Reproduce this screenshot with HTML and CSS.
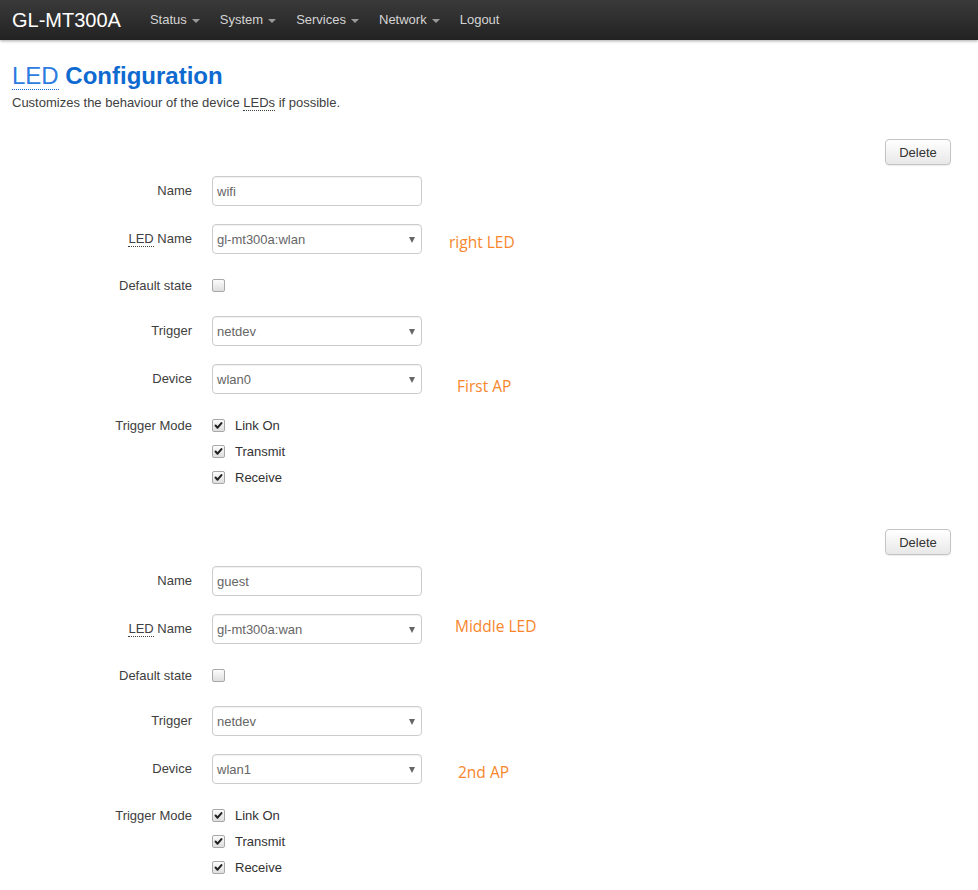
FILE: index.html
```html
<!DOCTYPE html>
<html>
<head>
<meta charset="utf-8">
<title>GL-MT300A - LED Configuration</title>
<link rel="stylesheet" href="styles.css">
</head>
<body>
<header class="navbar">
  <a class="brand" href="#">GL-MT300A</a>
  <nav class="nav">
    <a href="#">Status<span class="caret"></span></a>
    <a href="#">System<span class="caret"></span></a>
    <a href="#">Services<span class="caret"></span></a>
    <a href="#">Network<span class="caret"></span></a>
    <a href="#">Logout</a>
  </nav>
</header>

<main class="content">
  <h1 class="title"><abbr class="abbr-title">LED</abbr> Configuration</h1>
  <p class="desc">Customizes the behaviour of the device <abbr class="abbr">LEDs</abbr> if possible.</p>

  <section class="section">
    <div class="actions"><button class="btn">Delete</button></div>
    <div class="row">
      <label class="lbl">Name</label>
      <div class="field"><input class="input" type="text" value="wifi"></div>
    </div>
    <div class="row">
      <label class="lbl"><abbr class="abbr">LED</abbr> Name</label>
      <div class="field"><div class="select">gl-mt300a:wlan<span class="arrow"></span></div></div>
      <span class="note note-1">right LED</span>
    </div>
    <div class="row row-check">
      <label class="lbl">Default state</label>
      <div class="field"><span class="cb"></span></div>
    </div>
    <div class="row">
      <label class="lbl">Trigger</label>
      <div class="field"><div class="select">netdev<span class="arrow"></span></div></div>
    </div>
    <div class="row">
      <label class="lbl">Device</label>
      <div class="field"><div class="select">wlan0<span class="arrow"></span></div></div>
      <span class="note note-2">First AP</span>
    </div>
    <div class="row row-modes">
      <label class="lbl">Trigger Mode</label>
      <div class="field modes">
        <div class="opt"><span class="cb on"><svg viewBox="0 0 13 13"><path d="M3 6.5l2.4 2.6L10 3.6" /></svg></span>Link On</div>
        <div class="opt"><span class="cb on"><svg viewBox="0 0 13 13"><path d="M3 6.5l2.4 2.6L10 3.6" /></svg></span>Transmit</div>
        <div class="opt"><span class="cb on"><svg viewBox="0 0 13 13"><path d="M3 6.5l2.4 2.6L10 3.6" /></svg></span>Receive</div>
      </div>
    </div>
  </section>

  <section class="section">
    <div class="actions"><button class="btn">Delete</button></div>
    <div class="row">
      <label class="lbl">Name</label>
      <div class="field"><input class="input" type="text" value="guest"></div>
    </div>
    <div class="row">
      <label class="lbl"><abbr class="abbr">LED</abbr> Name</label>
      <div class="field"><div class="select">gl-mt300a:wan<span class="arrow"></span></div></div>
      <span class="note note-3">Middle LED</span>
    </div>
    <div class="row row-check">
      <label class="lbl">Default state</label>
      <div class="field"><span class="cb"></span></div>
    </div>
    <div class="row">
      <label class="lbl">Trigger</label>
      <div class="field"><div class="select">netdev<span class="arrow"></span></div></div>
    </div>
    <div class="row">
      <label class="lbl">Device</label>
      <div class="field"><div class="select">wlan1<span class="arrow"></span></div></div>
      <span class="note note-4">2nd AP</span>
    </div>
    <div class="row row-modes">
      <label class="lbl">Trigger Mode</label>
      <div class="field modes">
        <div class="opt"><span class="cb on"><svg viewBox="0 0 13 13"><path d="M3 6.5l2.4 2.6L10 3.6" /></svg></span>Link On</div>
        <div class="opt"><span class="cb on"><svg viewBox="0 0 13 13"><path d="M3 6.5l2.4 2.6L10 3.6" /></svg></span>Transmit</div>
        <div class="opt"><span class="cb on"><svg viewBox="0 0 13 13"><path d="M3 6.5l2.4 2.6L10 3.6" /></svg></span>Receive</div>
      </div>
    </div>
  </section>
</main>
</body>
</html>
```

FILE: styles.css
```css
* { box-sizing: border-box; }
html, body { margin: 0; padding: 0; background: #fff; }
body {
  font-family: "Liberation Sans", Arial, sans-serif;
  font-size: 13px;
  color: #404040;
  overflow: hidden;
}

.navbar {
  height: 40px;
  display: flex;
  align-items: center;
  padding-left: 12px;
  background: linear-gradient(to bottom, #3a3a3a 0%, #222 100%);
  box-shadow: 0 1px 3px rgba(0,0,0,0.35);
}
.brand {
  color: #fff;
  font-size: 20px;
  text-decoration: none;
  margin-right: 19px;
  line-height: 40px;
}
.nav { display: flex; height: 40px; }
.nav a {
  color: #d4d4d4;
  text-decoration: none;
  font-size: 13px;
  padding: 0 10px;
  line-height: 40px;
  display: flex;
  align-items: center;
}
.caret {
  display: inline-block;
  width: 0; height: 0;
  margin-left: 5px;
  margin-top: 1px;
  border-left: 4px solid transparent;
  border-right: 4px solid transparent;
  border-top: 4px solid #9a9a9a;
}

.content { padding: 0 12px; }
.title {
  margin: 20px 0 0;
  font-size: 24px;
  line-height: 31px;
  font-weight: bold;
  color: #0f6ad0;
}
.abbr-title {
  font-weight: normal;
  text-decoration: none;
  border-bottom: 1px dotted #1a6fd8;
  color: #2b7be0;
}
.abbr {
  text-decoration: none;
  border-bottom: 1px dotted #404040;
}
.desc {
  margin: 3px 0 0;
  font-size: 13px;
  line-height: 18px;
  color: #404040;
}

.section { padding-top: 27px; padding-bottom: 39px; }
.section + .section { padding-top: 0; }
.actions {
  display: flex;
  justify-content: flex-end;
  padding-right: 15px;
  margin-bottom: 11px;
}
.btn {
  height: 26px;
  width: 66px;
  font-family: "Liberation Sans", Arial, sans-serif;
  font-size: 13px;
  color: #333;
  background: linear-gradient(to bottom, #fff 0%, #e8e8e8 100%);
  border: 1px solid #c4c4c4;
  border-radius: 4px;
  box-shadow: 0 1px 1px rgba(0,0,0,0.08);
  padding: 0;
}

.row {
  display: flex;
  align-items: center;
  margin-bottom: 18px;
  height: 30px;
}
.row-check { height: 28px; margin-bottom: 16px; }
.row-check .cb { transform: translateY(1px); }
.row-modes { align-items: flex-start; margin-top: 4px; margin-bottom: 0; height: auto; }
.row-modes .lbl { padding-top: 1px; }
.lbl {
  width: 180px;
  text-align: right;
  margin-right: 20px;
  line-height: 26px;
  color: #404040;
}
.field { width: 210px; }

.input, .select {
  display: flex;
  align-items: center;
  width: 210px;
  height: 30px;
  border: 1px solid #ccc;
  border-radius: 4px;
  padding: 0 4px;
  font-family: "Liberation Sans", Arial, sans-serif;
  font-size: 13px;
  color: #666;
  background: #fff;
  box-shadow: inset 0 1px 1px rgba(0,0,0,0.06);
  position: relative;
}
.arrow {
  position: absolute;
  right: 6px;
  top: 12px;
  width: 0; height: 0;
  border-left: 3.5px solid transparent;
  border-right: 3.5px solid transparent;
  border-top: 6px solid #666;
}

.cb {
  display: inline-flex;
  width: 13px;
  height: 13px;
  border: 1px solid #a8a8a8;
  border-radius: 2px;
  background: linear-gradient(to bottom, #fcfcfc, #dedede);
}
.cb svg { width: 11px; height: 11px; }
.cb path { fill: none; stroke: #222; stroke-width: 2.4; stroke-linecap: round; stroke-linejoin: round; }

.modes { display: flex; flex-direction: column; }
.opt {
  display: flex;
  align-items: center;
  height: 26px;
  color: #333;
}
.opt .cb { margin-right: 10px; }

.note {
  font-family: "Open Sans", "Noto Sans", sans-serif;
  font-size: 15.5px;
  color: #f7862c;
  white-space: nowrap;
}
.note-1 { margin-left: 27px; transform: translateY(3px); }
.note-2 { margin-left: 35px; transform: translateY(7px); }
.note-3 { margin-left: 33px; transform: translateY(-3px); }
.note-4 { margin-left: 36px; transform: translateY(3px); }
```
